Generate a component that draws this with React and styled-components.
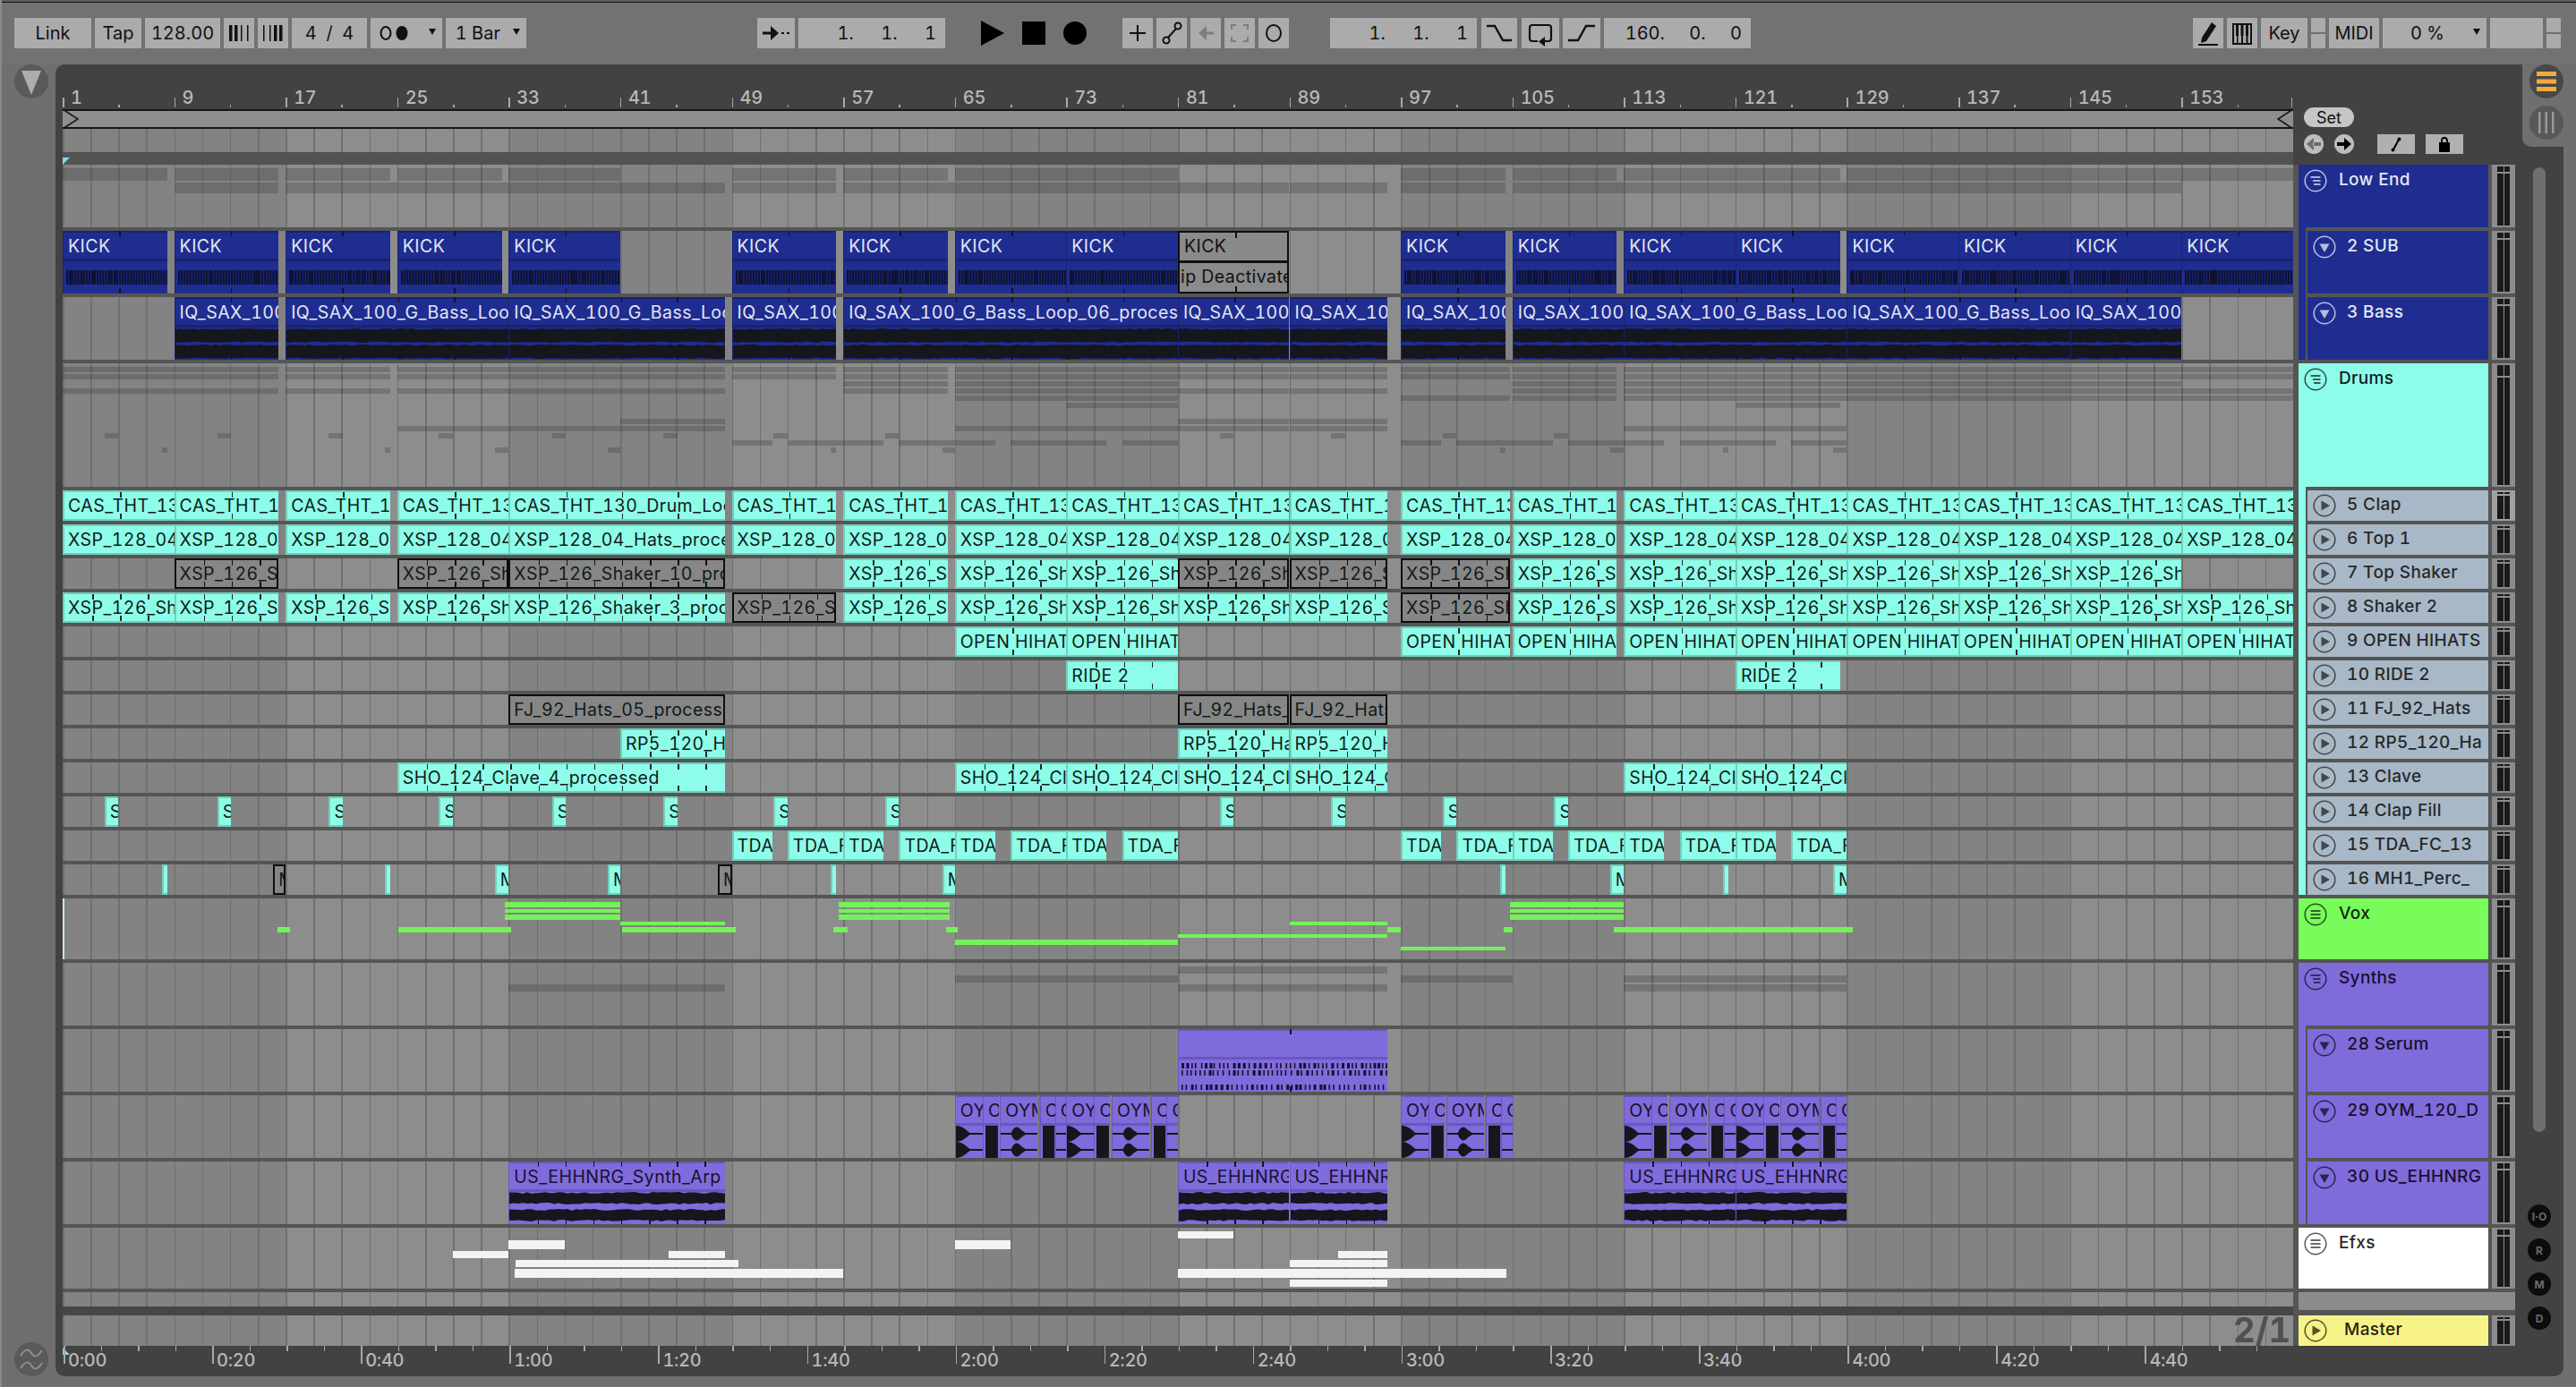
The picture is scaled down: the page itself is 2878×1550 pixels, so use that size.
import React from "react";
import styled, { createGlobalStyle, css } from "styled-components";

const BAR = 15.574;
const barX = (n) => (n - 1) * BAR;
const barW = (s, e) => (e - s) * BAR;

const TONES = {
  blue: { bg: "#1f2d90", edge: "#18236f", text: "#e4e6f4", ink: "#0e1230" },
  aqua: { bg: "#8dfde9", edge: "#72cfbb", text: "#12201e", ink: "#1c2a28" },
  steel: { bg: "#a8b8c6", edge: "#8b99a6", text: "#26292c", ink: "#26292c" },
  green: { bg: "#78fc5a", edge: "#62cf4a", text: "#14240f", ink: "#14240f" },
  purple: { bg: "#806bdb", edge: "#6a56bd", text: "#17112f", ink: "#17112f" },
  white: { bg: "#ffffff", edge: "#dddddd", text: "#2b2b2b", ink: "#333" },
  yellow: { bg: "#f8f389", edge: "#d0cc70", text: "#26250f", ink: "#3a3912" },
};

const GlobalStyle = createGlobalStyle`
  html, body {
    margin: 0;
    padding: 0;
    background: #6f6f6f;
  }
  * {
    box-sizing: border-box;
  }
`;

const Page = styled.div`
  width: 2878px;
  height: 1550px;
  overflow: hidden;
  background: #6f6f6f;
  border-left: 2px solid #8a8a8a;
  font-family: Inter, "Liberation Sans", sans-serif;
  font-variant-numeric: tabular-nums;
  display: flex;
  flex-direction: column;
`;

const TopEdge = styled.div`
  height: 3px;
  background: #5c5c5c;
  border-bottom: 1px solid #111;
`;

const Toolbar = styled.div`
  height: 69px;
  padding: 17px 0 0 14px;
  display: flex;
  gap: 4px;
  background: #727272;
`;

const ToolBox = styled.div`
  width: ${(p) => p.$w}px;
  height: 34px;
  margin-left: ${(p) => p.$ml || 0}px;
  flex: none;
  background: ${(p) => (p.$bare ? "transparent" : "#ababab")};
  color: #111;
  font-size: 20px;
  white-space: pre;
  word-spacing: ${(p) => p.$ws || 0}px;
  display: flex;
  align-items: center;
  justify-content: ${(p) => p.$justify || "center"};
  padding-right: ${(p) => p.$pr || 0}px;
  position: relative;
`;

const SplitBox = styled.div`
  width: ${(p) => p.$w}px;
  height: 34px;
  flex: none;
  display: flex;
  flex-direction: column;
  gap: 2px;
  & > i {
    flex: 1;
    background: #ababab;
  }
`;

const Caret = styled.span`
  position: absolute;
  right: 7px;
  top: 12px;
  border-left: 4.5px solid transparent;
  border-right: 4.5px solid transparent;
  border-top: 7px solid #111;
`;

const MainRow = styled.div`
  flex: 1;
  display: flex;
`;

const LeftRail = styled.div`
  width: 60px;
  height: 1466px;
  padding-left: 14px;
  display: flex;
  flex-direction: column;
  justify-content: space-between;
`;

const RailPill = styled.div`
  width: 38px;
  height: 38px;
  border-radius: 19px;
  background: ${(p) => p.$bg || "#5a5a5a"};
  display: flex;
  align-items: center;
  justify-content: center;
`;

const Panel = styled.div`
  position: relative;
  width: 2802px;
  height: 1466px;
  background: #424242;
  border-radius: 10px;
  display: flex;
`;

const PanelNotch = styled.div`
  position: absolute;
  top: 0;
  right: 0;
  width: 46px;
  height: 92px;
  background: #6f6f6f;
  border-bottom-left-radius: 10px;
  padding-left: 8px;
  display: flex;
  flex-direction: column;
  gap: 8px;
`;

const PanelMain = styled.div`
  width: 2748px;
  display: flex;
  flex-direction: column;
`;

const Gutter = styled.div`
  width: 54px;
  padding-top: 115px;
  display: flex;
  flex-direction: column;
  align-items: flex-start;
`;

const ScrollThumb = styled.div`
  width: 14px;
  height: 1078px;
  margin-left: 20px;
  border-radius: 7px;
  background: #6f6f6f;
`;

const RoundKeys = styled.div`
  margin: 81px 0 0 14px;
  display: flex;
  flex-direction: column;
  gap: 12px;
`;

const RoundKey = styled.div`
  width: 26px;
  height: 26px;
  border-radius: 50%;
  background: #0c0c0c;
  color: #6a6a6a;
  font-size: 12px;
  font-weight: 700;
  display: flex;
  align-items: center;
  justify-content: center;
`;

const RulerTop = styled.div`
  height: 112px;
  padding-left: 8px;
  display: flex;
`;

const RulerColumn = styled.div`
  width: 2492px;
  display: flex;
  flex-direction: column;
`;

const BeatRuler = styled.div`
  position: relative;
  height: 48px;
`;

const RulerTick = styled.span`
  position: absolute;
  ${(p) => (p.$flip ? "top: 0;" : "bottom: 0;")}
  width: 1.5px;
  height: ${(p) => p.$h}px;
  background: #a8a8a8;
`;

const RulerLabel = styled.span`
  position: absolute;
  top: ${(p) => p.$top}px;
  color: #b8b8b8;
  font-size: 20px;
  line-height: 24px;
  font-weight: 500;
  letter-spacing: -0.3px;
`;

const LoopStrip = styled.div`
  position: relative;
  height: 22px;
  margin-top: 2px;
  background: #8e8e8e;
  border-top: 2px solid #161616;
  border-bottom: 2px solid #161616;
`;

const LoopBrace = styled.svg`
  position: absolute;
  top: -2px;
  ${(p) => (p.$right ? "right: 0;" : "left: 0;")}
`;

const gridBack = css`
  background-color: #828282;
  background-image: repeating-linear-gradient(
      90deg,
      #707070 0 1.6px,
      transparent 1.6px 31.148px
    ),
    repeating-linear-gradient(
      90deg,
      #838383 0 249.18px,
      #8d8d8d 249.18px 498.37px
    );
`;

const GridStrip = styled.div`
  height: 26px;
  ${gridBack}
`;

const DarkBand = styled.div`
  position: relative;
  height: 14px;
  background: #525252;
`;

const PlayFlag = styled.span`
  position: absolute;
  left: 0;
  bottom: 0;
  width: 8px;
  height: 8px;
  background: #7fdcf0;
  clip-path: polygon(0 0, 100% 0, 0 100%);
`;

const PlayFoot = styled.span`
  position: absolute;
  left: 0;
  top: 2px;
  width: 8px;
  height: 8px;
  background: #7fdcf0;
  clip-path: polygon(0 0, 100% 100%, 0 100%);
`;

const SetControls = styled.div`
  width: 248px;
  padding: 48px 0 0 12px;
  display: flex;
  flex-direction: column;
  gap: 8px;
`;

const SetPill = styled.div`
  width: 56px;
  height: 22px;
  border-radius: 11px;
  background: #c6c6c6;
  color: #111;
  font-size: 18px;
  display: flex;
  align-items: center;
  justify-content: center;
`;

const SetRow = styled.div`
  display: flex;
  align-items: center;
`;

const NavDot = styled.div`
  width: 22px;
  height: 22px;
  margin-right: 12px;
  border-radius: 50%;
  background: #bdbdbd;
  display: flex;
  align-items: center;
  justify-content: center;
`;

const SetKey = styled.div`
  width: 42px;
  height: 22px;
  margin-left: ${(p) => p.$ml}px;
  background: #b0b0b0;
  display: flex;
  align-items: center;
  justify-content: center;
`;

const TrackStack = styled.div`
  margin-left: 8px;
  background: #555555;
  display: flex;
  flex-direction: column;
  gap: 4px;
`;

const TrackRow = styled.div`
  position: relative;
  height: ${(p) => p.$h}px;
  display: flex;
  ${(p) =>
    p.$split &&
    css`
      margin-top: 6px;
      &::before {
        content: "";
        position: absolute;
        left: 0;
        top: -10px;
        width: 2492px;
        height: 10px;
        background: #464646;
      }
    `}
`;

const Lane = styled.div`
  position: relative;
  width: 2492px;
  height: 100%;
  flex: none;
  margin-right: 6px;
  overflow: hidden;
  ${gridBack}
`;

const TrackHead = styled.div`
  position: relative;
  width: ${(p) => (p.$strip ? 202 : 212)}px;
  height: 100%;
  flex: none;
  margin-left: ${(p) => (p.$strip ? 10 : 0)}px;
  margin-right: 4px;
  padding: ${(p) => (p.$small ? 4 : 5)}px 0 0 6px;
  background: ${(p) => TONES[p.$tone].bg};
  color: ${(p) => TONES[p.$tone].text};
  display: flex;
  align-items: flex-start;
  ${(p) =>
    p.$strip &&
    css`
      &::before {
        content: "";
        position: absolute;
        left: -10px;
        top: -4px;
        bottom: 0;
        width: 8px;
        background: ${TONES[p.$strip].bg};
      }
    `}
`;

const HeadName = styled.span`
  margin-left: ${(p) => p.$ml}px;
  margin-top: -1px;
  font-size: 19px;
  line-height: 25px;
  font-weight: 500;
  white-space: nowrap;
  letter-spacing: 0.35px;
`;

const Meter = styled.div`
  width: 26px;
  height: 100%;
  flex: none;
  padding: 2px 6px;
  background: ${(p) => (p.$lit ? "#a0a0a0" : "#8c8c8c")};
  display: flex;
  gap: 1px;
`;

const MeterCol = styled.div`
  flex: 1;
  display: flex;
  flex-direction: column;
  gap: 2px;
  & > i:first-child {
    height: ${(p) => p.$cap}px;
    background: #1a1a1a;
  }
  & > i:last-child {
    flex: 1;
    background: #1a1a1a;
  }
`;

const SplitRest = styled.div`
  width: 242px;
  height: 20px;
  background: #8c8c8c;
`;

const TwoOne = styled.span`
  position: absolute;
  right: 3px;
  top: -3px;
  color: #505050;
  font-size: 38px;
  line-height: 38px;
  font-weight: 700;
`;

const TimeRuler = styled.div`
  position: relative;
  height: 34px;
  margin-left: 8px;
  width: 2492px;
`;

const LaneBar = styled.span`
  position: absolute;
  background: rgba(50, 50, 50, 0.27);
`;

const Note = styled.span`
  position: absolute;
  background: ${(p) => p.$color};
`;

const PlayLine = styled.span`
  position: absolute;
  left: 0;
  top: 0;
  bottom: 0;
  width: 2px;
  background: #bfe9f4;
`;

const clipFrame = css`
  position: absolute;
  top: 0;
  bottom: 0;
  overflow: hidden;
`;

const clipText = css`
  font-size: 19.5px;
  letter-spacing: 0.45px;
  white-space: nowrap;
`;

const FlatClip = styled.div`
  ${clipFrame}
  ${clipText}
  padding-left: 4px;
  background: ${(p) => (p.$off ? "#868686" : TONES.aqua.bg)};
  border: 2px solid ${(p) => (p.$off ? "#0e0e0e" : TONES.aqua.edge)};
  border-right: ${(p) => (p.$off ? "2px solid #0e0e0e" : "none")};
  color: #0f1a18;
  line-height: 30px;
`;

const ClipTick = styled.i`
  position: absolute;
  ${(p) => (p.$low ? "bottom: 0;" : "top: 0;")}
  width: 1.5px;
  height: 6px;
  background: ${(p) => p.$color};
`;

const TallClip = styled.div`
  ${clipFrame}
  background: ${(p) => (p.$off ? "#8a8a8a" : TONES[p.$tone].bg)};
  border-left: 1.5px solid ${(p) => (p.$off ? "#0e0e0e" : TONES[p.$tone].edge)};
  ${(p) => p.$off && "border: 2px solid #0e0e0e;"}
  color: ${(p) => (p.$off ? "#111" : TONES[p.$tone].text)};
  display: flex;
  flex-direction: column;
`;

const TallHead = styled.div`
  ${clipText}
  flex: none;
  height: 34px;
  padding-left: 5px;
  border-top: ${(p) => (p.$off ? "0" : `2px solid ${p.$edge}`)};
  border-bottom: 3px solid ${(p) => p.$edge};
  line-height: 31px;
`;

const TallBody = styled.div`
  flex: 1;
  overflow: hidden;
`;

const OffNote = styled.div`
  ${clipText}
  line-height: 30px;
  display: flex;
  justify-content: center;
`;

const rng = (seed) => {
  let s = seed * 9301 + 49297;
  return () => {
    s = (s * 9301 + 49297) % 233280;
    return s / 233280;
  };
};

// Kick clips: a dense comb of hits
const KickWave = ({ width, seed }) => {
  const r = rng(seed);
  const bars = [];
  for (let x = 3; x < width - 2; x += 3.1) {
    const w = r() > 0.86 ? 3.1 : 2.2;
    bars.push(<rect key={x} x={x} y="10" width={w} height="16" />);
  }
  return (
    <svg width={width} height="36" fill={TONES.blue.ink} style={{ display: "block" }}>
      {bars}
    </svg>
  );
};

const bandPath = (width, top, bottom, r, amp) => {
  let up = `M0 ${top}`;
  let down = "";
  for (let x = 0; x <= width + 5; x += 5) {
    up += ` L${x} ${top + r() * amp}`;
    down = ` L${x} ${bottom - r() * amp}` + down;
  }
  return `${up}${down} Z`;
};

// Two channels of a loud waveform, with a thin gap in the middle
const BandWave = ({ width, seed, rows, amp }) => {
  const r = rng(seed);
  return (
    <svg width={width} height="36" fill="#16161d" style={{ display: "block" }}>
      {rows.map(([a, b]) => (
        <path key={a} d={bandPath(width, a, b, r, amp)} />
      ))}
    </svg>
  );
};

const SerumWave = ({ width, seed }) => {
  const r = rng(seed);
  const marks = [];
  [[4, 6], [12, 6], [28, 6]].forEach(([y, h]) => {
    for (let x = 3; x < width - 2; x += 3.9 + r() * 3) {
      marks.push(<rect key={`${y}-${x}`} x={x} y={y} width={r() > 0.7 ? 3 : 1.6} height={h} />);
    }
  });
  return (
    <svg width={width} height="36" fill="#17112f" style={{ display: "block" }}>
      {marks}
    </svg>
  );
};

const hitPath = (kind, w, c) => {
  const h = 9;
  if (kind === "decay")
    return `M0 ${c - h} C${w * 0.25} ${c - h} ${w * 0.4} ${c - 3} ${w * 0.5} ${c - 1} H${w} V${c + 1} H${w * 0.5} C${w * 0.4} ${c + 3} ${w * 0.25} ${c + h} 0 ${c + h} Z`;
  if (kind === "swell")
    return `M0 ${c - 1} H${w * 0.28} C${w * 0.36} ${c - h} ${w * 0.45} ${c - h} ${w * 0.55} ${c - 4} L${w * 0.66} ${c - 1} H${w} V${c + 1} H${w * 0.66} L${w * 0.55} ${c + 4} C${w * 0.45} ${c + h} ${w * 0.36} ${c + h} ${w * 0.28} ${c + 1} H0 Z`;
  if (kind === "block") return `M2 ${c - h} H${w - 2} V${c + h} H2 Z`;
  return `M0 ${c - 1} H${w} V${c + 1} H0 Z`;
};

const HitWave = ({ width, kind }) => (
  <svg width={width} height="36" fill="#16161d" style={{ display: "block" }}>
    <path d={hitPath(kind, width, 9)} />
    <path d={hitPath(kind, width, 27)} />
  </svg>
);

const FoldIcon = ({ kind, flat }) => (
  <svg width="26" height="26" viewBox="0 0 26 26" fill="none" stroke="currentColor" style={{ flex: "none", opacity: 0.78 }}>
    <circle cx="13" cy="13" r="11.8" strokeWidth="1.5" />
    {kind === "group" && (
      <g strokeWidth="1.8">
        <path d="M7.5 9 H18.5" />
        <path d={flat ? "M7.5 13 H18.5" : "M10 13 H18.5"} />
        <path d={flat ? "M7.5 17 H18.5" : "M11 17 H18.5"} />
      </g>
    )}
    {kind === "down" && <path d="M7.5 9.5 H18.5 L13 19 Z" fill="currentColor" stroke="none" />}
    {kind === "play" && <path d="M9.5 7.5 L19 13 L9.5 18.5 Z" fill="currentColor" stroke="none" />}
  </svg>
);

const MeterCell = ({ cap, lit }) => (
  <Meter $lit={lit}>
    <MeterCol $cap={cap}>
      <i />
      <i />
    </MeterCol>
    <MeterCol $cap={cap}>
      <i />
      <i />
    </MeterCol>
  </Meter>
);

const Icon = ({ w = 34, children, fill = "none", stroke = "#111" }) => (
  <svg width={w} height="34" viewBox={`0 0 ${w} 34`} fill={fill} stroke={stroke} strokeWidth="2">
    {children}
  </svg>
);

const BarsIcon = ({ heavyFirst }) => (
  <Icon fill="#111" stroke="none">
    <rect x="6" y="8" width={heavyFirst ? 3.5 : 1.5} height="18" />
    <rect x={heavyFirst ? 12 : 13} y="8" width={heavyFirst ? 3.5 : 1.5} height="18" />
    <rect x={heavyFirst ? 19 : 18} y="8" width={heavyFirst ? 1.5 : 3.5} height="18" />
    <rect x={heavyFirst ? 26 : 24} y="8" width={heavyFirst ? 1.5 : 3.5} height="18" />
  </Icon>
);

const KICK = [[1, 8.5], [9, 16.5], [17, 24.5], [25, 32.5], [33, 41], [49, 56.5], [57, 64.5], [65, 73], [73, 81], [81, 89, 1], [97, 104.5], [105, 112.5], [113, 121], [121, 128.5], [129, 137], [137, 145], [145, 153], [153, 161]];
const BASS = [[9, 16.5], [17, 33], [33, 48.5], [49, 56.5], [57, 81], [81, 89], [89, 96], [97, 104.5], [105, 113], [113, 129], [129, 145], [145, 153]];
const LOOP = [[1, 9], [9, 16.5], [17, 24.5], [25, 33], [33, 48.5], [49, 56.5], [57, 64.5], [65, 73], [73, 81], [81, 89], [89, 96], [97, 104.8], [105, 112.5], [113, 121], [121, 129], [129, 137], [137, 145], [145, 153], [153, 161]];

const tdaSpans = [49, 57, 65, 73, 97, 105, 113, 121].flatMap((s) => [[s, s + 2.9], [s + 4, s + 8]]);
const hitSpans = (list, len) => list.map((s) => [s, s + len]);

const DRUM_ROWS = [
  { name: "5 Clap", label: "CAS_THT_130_Drum_Loop", tick: 4, clips: LOOP, lit: true },
  { name: "6 Top 1", label: "XSP_128_04_Hats_processed", clips: LOOP },
  {
    name: "7 Top Shaker",
    label: "XSP_126_Shaker_10_processed",
    tick: 2,
    clips: [[9, 16.5, 1], [25, 33, 1], [33, 48.5, 1], [57, 64.5], [65, 73], [73, 81], [81, 89, 1], [89, 96, 1], [97, 104.8, 1], [105, 112.5], [113, 121], [121, 129], [129, 137], [137, 145], [145, 153]],
  },
  {
    name: "8 Shaker 2",
    label: "XSP_126_Shaker_3_processed",
    tick: 2,
    clips: LOOP.map(([s, e]) => (s === 49 || s === 97 ? [s, e, 1] : [s, e])),
  },
  {
    name: "9 OPEN HIHATS",
    label: "OPEN HIHATS",
    tick: 4,
    clips: [[65, 73], [73, 81], [97, 104.8], [105, 112.5], [113, 121], [121, 129], [129, 137], [137, 145], [145, 153], [153, 161]],
  },
  { name: "10 RIDE 2", label: "RIDE 2", tick: 2, clips: [[73, 81], [121, 128.5]] },
  { name: "11 FJ_92_Hats", label: "FJ_92_Hats_05_processed", clips: [[33, 48.5, 1], [81, 89, 1], [89, 96, 1]] },
  { name: "12 RP5_120_Ha", label: "RP5_120_Hats", tick: 2, clips: [[41, 48.5], [81, 89], [89, 96]] },
  { name: "13 Clave", label: "SHO_124_Clave_4_processed", tick: 2, clips: [[25, 48.5], [65, 73], [73, 81], [81, 89], [89, 96], [113, 121], [121, 129]] },
  { name: "14 Clap Fill", label: "S", clips: hitSpans([4, 12.1, 20.1, 28, 36.1, 44.1, 52, 60, 84, 92, 100, 108], 1) },
  { name: "15 TDA_FC_13", label: "TDA_FC_13", clips: tdaSpans },
  {
    name: "16 MH1_Perc_",
    label: "M",
    clips: [[8.15, 8.5], [16.1, 17, 1], [24.1, 24.5], [32, 33], [40.1, 41], [48, 49, 1], [56.1, 56.5], [64.1, 65], [104.1, 104.5], [112, 113], [120.1, 120.5], [128, 129]],
  },
];

const VOX_NOTES = [
  ...[[32.7, 41], [56.7, 64.6], [104.8, 113]].flatMap(([s, e]) => [[s, e, 4, 6], [s, e, 12, 4], [s, e, 18, 6]]),
  [41, 48.5, 26, 4],
  [89, 96, 26, 4],
  [16.4, 17.3, 32, 6],
  [25.1, 33.2, 32, 6],
  [41.1, 49.3, 32, 6],
  [56.3, 57.3, 32, 6],
  [64.4, 65.2, 32, 6],
  [96, 97, 32, 6],
  [104.4, 105, 32, 6],
  [112.3, 129.4, 32, 6],
  [81, 96, 40, 4],
  [65, 81, 46, 6],
  [97, 104.5, 54, 4],
];

const EFX_NOTES = [
  [33, 37, 14, 10],
  [65, 69, 14, 10],
  [81, 85, 4, 8],
  [29, 33, 26, 8],
  [44.5, 48.5, 26, 8],
  [92.5, 96, 26, 8],
  [33.5, 49.5, 36, 8],
  [89, 96, 36, 8],
  [33.4, 57, 46, 10],
  [81, 104.6, 46, 10],
  [89, 96, 58, 8],
];

const OYM_STARTS = [65, 73, 97, 113, 121];
const OYM_PARTS = [[0, 2, "decay"], [2, 3.15, "block"], [3.25, 5.95, "swell"], [6.1, 7.2, "block"], [7.2, 8, "line"]];
const OYM_CLIPS = OYM_STARTS.flatMap((s) => OYM_PARTS.map(([a, b, kind]) => ({ s: s + a, e: s + b, kind })));

const SYNTH_BARS = [
  [81, 96, 4],
  [65, 81, 14],
  [97, 105, 14],
  [113, 129, 14],
  [33, 48.5, 24],
  [81, 96, 24],
  [113, 129, 24],
];

const US_CLIPS = [[33, 48.5], [81, 89], [89, 96], [113, 121], [121, 129]];

const ticksFor = (s, e, step, color, both = true) => {
  const out = [];
  for (let t = step; s + t < e; t += step) {
    const left = t * BAR;
    out.push(<ClipTick key={`a${t}`} $color={color} style={{ left }} />);
    if (both) out.push(<ClipTick key={`b${t}`} $low $color={color} style={{ left }} />);
  }
  return out;
};

const SmallClips = ({ row }) =>
  row.clips.map(([s, e, off]) => (
    <FlatClip key={s} $off={off} style={{ left: barX(s), width: barW(s, e) }}>
      {row.tick ? ticksFor(s, e, row.tick, off ? "#111" : TONES.aqua.ink) : null}
      {row.label}
    </FlatClip>
  ));

const Bars = ({ spans, top, height }) =>
  spans
    .filter((c) => !c[2])
    .map(([s, e]) => (
      <LaneBar key={`${top}-${s}`} style={{ left: barX(s), width: barW(s, e), top, height }} />
    ));

const App = () => {
  const beatNumbers = [];
  for (let n = 1; n <= 153; n += 8) beatNumbers.push(n);
  const timeLabels = [];
  for (let i = 0; i < 15; i++) {
    const total = i * 20;
    timeLabels.push(`${Math.floor(total / 60)}:${String(total % 60).padStart(2, "0")}`);
  }

  return (
    <>
      <GlobalStyle />
      <Page>
        <TopEdge />
        <Toolbar>
          <ToolBox $w={86}>Link</ToolBox>
          <ToolBox $w={52}>Tap</ToolBox>
          <ToolBox $w={84}>128.00</ToolBox>
          <ToolBox $w={34}>
            <BarsIcon heavyFirst />
          </ToolBox>
          <ToolBox $w={34}>
            <BarsIcon />
          </ToolBox>
          <ToolBox $w={84}>{"4  /  4"}</ToolBox>
          <ToolBox $w={80} $justify="flex-start">
            <svg width="50" height="34" fill="#111" stroke="#111" strokeWidth="2">
              <ellipse cx="17" cy="17" rx="5.5" ry="7" fill="none" />
              <ellipse cx="35" cy="17" rx="6.5" ry="8" stroke="none" />
            </svg>
            <Caret />
          </ToolBox>
          <ToolBox $w={90} $justify="flex-start">
            {"  1 Bar"}
            <Caret />
          </ToolBox>
          <ToolBox $w={42} $ml={254}>
            <Icon w={42}>
              <path d="M6 17 H20" strokeWidth="3" />
              <path d="M15 9 L24 17 L15 25 Z" fill="#111" stroke="none" />
              <path d="M27 17 H30 M33 17 H36" strokeWidth="2" />
            </Icon>
          </ToolBox>
          <ToolBox $w={164} $justify="flex-end" $pr={10} $ws={25}>
            1. 1. 1
          </ToolBox>
          <ToolBox $w={26} $ml={36} $bare>
            <svg width="26" height="34" fill="#000">
              <path d="M0 3 L26 17 L0 31 Z" />
            </svg>
          </ToolBox>
          <ToolBox $w={26} $ml={16} $bare>
            <svg width="26" height="34" fill="#000">
              <rect x="0" y="4" width="26" height="26" />
            </svg>
          </ToolBox>
          <ToolBox $w={26} $ml={16} $bare>
            <svg width="26" height="34" fill="#000">
              <ellipse cx="13" cy="17" rx="13" ry="13" />
            </svg>
          </ToolBox>
          <ToolBox $w={34} $ml={36}>
            <Icon>
              <path d="M17 8 V26 M8 17 H26" />
            </Icon>
          </ToolBox>
          <ToolBox $w={34}>
            <Icon>
              <circle cx="11" cy="25" r="3.5" />
              <circle cx="24" cy="9" r="3.5" />
              <path d="M13 22 L22 12" />
            </Icon>
          </ToolBox>
          <ToolBox $w={34}>
            <Icon stroke="#7d7d7d">
              <path d="M26 17 H16" strokeWidth="3" />
              <path d="M18 9 L9 17 L18 25 Z" fill="#7d7d7d" stroke="none" />
            </Icon>
          </ToolBox>
          <ToolBox $w={34}>
            <Icon stroke="#7d7d7d">
              <path d="M8 13 V8 H13 M21 8 H26 V13 M26 21 V26 H21 M13 26 H8 V21" />
            </Icon>
          </ToolBox>
          <ToolBox $w={34}>
            <Icon>
              <ellipse cx="17" cy="17" rx="8" ry="9" />
            </Icon>
          </ToolBox>
          <ToolBox $w={164} $ml={42} $justify="flex-end" $pr={10} $ws={25}>
            1. 1. 1
          </ToolBox>
          <ToolBox $w={40} $ml={1}>
            <Icon w={40}>
              <path d="M6 9 H15 L24 25 H34" strokeWidth="2.4" />
            </Icon>
          </ToolBox>
          <ToolBox $w={42} $ml={1}>
            <Icon w={42}>
              <path d="M18 26 H12 Q9 26 9 23 V11 Q9 8 12 8 H30 Q33 8 33 11 V23 Q33 26 30 26 H25" strokeWidth="2.2" />
              <path d="M26 21 L19 26.5 L26 32 Z" fill="#111" stroke="none" />
            </Icon>
          </ToolBox>
          <ToolBox $w={42}>
            <Icon w={42}>
              <path d="M6 25 H17 L26 9 H36" strokeWidth="2.4" />
            </Icon>
          </ToolBox>
          <ToolBox $w={164} $justify="flex-end" $pr={10} $ws={22}>
            160. 0. 0
          </ToolBox>
          <ToolBox $w={34} $ml={490}>
            <Icon fill="#111" stroke="none">
              <path d="M10 22 L21 5 L26 9 L15 26 L9 28 Z" />
              <rect x="6" y="29" width="22" height="2" />
            </Icon>
          </ToolBox>
          <ToolBox $w={34}>
            <Icon fill="#111" stroke="none">
              <path d="M6 6 H28 V30 H6 Z M8 8 V28 H11 V20 H10 V8 Z M13 8 V20 H12.5 V28 H16 V20 H15.5 V8 Z M18.5 8 V20 H18 V28 H21.5 V20 H21 V8 Z M24 8 V20 H23.5 V28 H26 V8 Z" fillRule="evenodd" />
            </Icon>
          </ToolBox>
          <ToolBox $w={52}>Key</ToolBox>
          <SplitBox $w={16}>
            <i />
            <i />
          </SplitBox>
          <ToolBox $w={56}>MIDI</ToolBox>
          <ToolBox $w={116}>
            {"0 %   "}
            <Caret />
          </ToolBox>
          <ToolBox $w={59} />
          <SplitBox $w={16}>
            <i />
            <i />
          </SplitBox>
        </Toolbar>
        <MainRow>
          <LeftRail>
            <RailPill>
              <svg width="22" height="30" fill="#adadad">
                <path d="M0 3 H22 L11 30 Z" />
              </svg>
            </RailPill>
            <RailPill>
              <svg width="26" height="30" fill="none" stroke="#8f8f8f" strokeWidth="2">
                <path d="M1 11 C6 3 10 3 13 8 C16 13 20 13 25 5" />
                <path d="M1 25 C6 17 10 17 13 22 C16 27 20 27 25 19" />
              </svg>
            </RailPill>
          </LeftRail>
          <Panel>
            <PanelMain>
              <RulerTop>
                <RulerColumn>
                  <BeatRuler>
                    {beatNumbers.map((n) => (
                      <React.Fragment key={n}>
                        <RulerTick $h={11} style={{ left: barX(n) }} />
                        <RulerTick $h={3} style={{ left: barX(n + 4) }} />
                        <RulerLabel $top={25} style={{ left: barX(n) + 9 }}>
                          {n}
                        </RulerLabel>
                      </React.Fragment>
                    ))}
                    <RulerTick $h={11} style={{ left: barX(161) - 2 }} />
                  </BeatRuler>
                  <LoopStrip>
                    <LoopBrace width="18" height="22" fill="none" stroke="#161616" strokeWidth="1.6">
                      <path d="M0 0 L17 11 L0 22" />
                    </LoopBrace>
                    <LoopBrace $right width="18" height="22" fill="none" stroke="#161616" strokeWidth="1.6">
                      <path d="M18 0 L1 11 L18 22" />
                    </LoopBrace>
                  </LoopStrip>
                  <GridStrip />
                  <DarkBand>
                    <PlayFlag />
                  </DarkBand>
                </RulerColumn>
                <SetControls>
                  <SetPill>Set</SetPill>
                  <SetRow>
                    <NavDot>
                      <svg width="18" height="16" fill="#6e6e6e">
                        <path d="M9 1 L1 8 L9 15 Z M8 6 H17 V10 H8 Z" />
                      </svg>
                    </NavDot>
                    <NavDot>
                      <svg width="18" height="16" fill="#000">
                        <path d="M9 1 L17 8 L9 15 Z M1 6 H10 V10 H1 Z" />
                      </svg>
                    </NavDot>
                    <SetKey $ml={14}>
                      <svg width="14" height="18" fill="#000" stroke="#000" strokeWidth="2">
                        <path d="M4 15 L10 4" />
                        <circle cx="10.5" cy="3.5" r="1" />
                        <circle cx="3.5" cy="15.5" r="1" />
                      </svg>
                    </SetKey>
                    <SetKey $ml={12}>
                      <svg width="16" height="20" fill="#000">
                        <path d="M2 8 H14 V19 H2 Z" />
                        <path d="M5 8 V6 A3 3 0 0 1 11 6 V8" fill="none" stroke="#000" strokeWidth="1.8" />
                      </svg>
                    </SetKey>
                  </SetRow>
                </SetControls>
              </RulerTop>
              <TrackStack>
                <TrackRow $h={70}>
                  <Lane>
                    <Bars spans={KICK} top={4} height={14} />
                    <Bars spans={BASS} top={20} height={12} />
                  </Lane>
                  <TrackHead $tone="blue">
                    <FoldIcon kind="group" />
                    <HeadName $ml={13}>Low End</HeadName>
                  </TrackHead>
                  <MeterCell cap={6} />
                </TrackRow>

                <TrackRow $h={70}>
                  <Lane>
                    {KICK.map(([s, e, off], i) => (
                      <TallClip key={s} $tone="blue" $off={off} style={{ left: barX(s), width: barW(s, e) }}>
                        {ticksFor(s, e, 4, off ? "#111" : TONES.blue.ink)}
                        <TallHead $off={off} $edge={off ? "#0e0e0e" : TONES.blue.edge}>KICK</TallHead>
                        <TallBody>
                          {off ? <OffNote>Clip Deactivated</OffNote> : <KickWave width={barW(s, e)} seed={i + 3} />}
                        </TallBody>
                      </TallClip>
                    ))}
                  </Lane>
                  <TrackHead $tone="blue" $strip="blue">
                    <FoldIcon kind="down" />
                    <HeadName $ml={12}>2 SUB</HeadName>
                  </TrackHead>
                  <MeterCell cap={6} />
                </TrackRow>

                <TrackRow $h={70}>
                  <Lane>
                    {BASS.map(([s, e], i) => (
                      <TallClip key={s} $tone="blue" style={{ left: barX(s), width: barW(s, e) }}>
                        {ticksFor(s, e, 4, TONES.blue.ink)}
                        <TallHead $edge={TONES.blue.edge}>IQ_SAX_100_G_Bass_Loop_06_processed</TallHead>
                        <TallBody>
                          <BandWave width={barW(s, e)} seed={i + 11} rows={[[1, 17], [19, 35]]} amp={1.4} />
                        </TallBody>
                      </TallClip>
                    ))}
                  </Lane>
                  <TrackHead $tone="blue" $strip="blue">
                    <FoldIcon kind="down" />
                    <HeadName $ml={12}>3 Bass</HeadName>
                  </TrackHead>
                  <MeterCell cap={6} />
                </TrackRow>

                <TrackRow $h={138}>
                  <Lane>
                    {DRUM_ROWS.map((row, i) => (
                      <Bars key={row.name} spans={row.clips} top={4 + i * 8 + (i >= 7 ? 2 : 0)} height={6} />
                    ))}
                  </Lane>
                  <TrackHead $tone="aqua">
                    <FoldIcon kind="group" />
                    <HeadName $ml={13}>Drums</HeadName>
                  </TrackHead>
                  <MeterCell cap={12} />
                </TrackRow>

                {DRUM_ROWS.map((row) => (
                  <TrackRow key={row.name} $h={34}>
                    <Lane>
                      <SmallClips row={row} />
                    </Lane>
                    <TrackHead $tone="steel" $strip="aqua" $small>
                      <FoldIcon kind="play" />
                      <HeadName $ml={12}>{row.name}</HeadName>
                    </TrackHead>
                    <MeterCell cap={2} lit={row.lit} />
                  </TrackRow>
                ))}

                <TrackRow $h={68}>
                  <Lane>
                    <PlayLine />
                    {VOX_NOTES.map(([s, e, top, height]) => (
                      <Note key={`${s}-${top}`} $color="#74f25a" style={{ left: barX(s), width: barW(s, e), top, height }} />
                    ))}
                  </Lane>
                  <TrackHead $tone="green">
                    <FoldIcon kind="group" flat />
                    <HeadName $ml={13}>Vox</HeadName>
                  </TrackHead>
                  <MeterCell cap={6} />
                </TrackRow>

                <TrackRow $h={70}>
                  <Lane>
                    {SYNTH_BARS.map(([s, e, top]) => (
                      <LaneBar key={`${s}-${top}`} style={{ left: barX(s), width: barW(s, e), top, height: 8 }} />
                    ))}
                  </Lane>
                  <TrackHead $tone="purple">
                    <FoldIcon kind="group" />
                    <HeadName $ml={13}>Synths</HeadName>
                  </TrackHead>
                  <MeterCell cap={6} />
                </TrackRow>

                <TrackRow $h={70}>
                  <Lane>
                    <TallClip $tone="purple" style={{ left: barX(81), width: barW(81, 96) }}>
                      {ticksFor(81, 96, 8, TONES.purple.ink)}
                      <TallHead $edge={TONES.purple.edge} />
                      <TallBody>
                        <SerumWave width={barW(81, 96)} seed={5} />
                      </TallBody>
                    </TallClip>
                  </Lane>
                  <TrackHead $tone="purple" $strip="purple">
                    <FoldIcon kind="down" />
                    <HeadName $ml={12}>28 Serum</HeadName>
                  </TrackHead>
                  <MeterCell cap={6} />
                </TrackRow>

                <TrackRow $h={70}>
                  <Lane>
                    {OYM_CLIPS.map(({ s, e, kind }) => (
                      <TallClip key={s} $tone="purple" style={{ left: barX(s), width: barW(s, e) }}>
                        <TallHead $edge={TONES.purple.edge}>OYM_120_Drums</TallHead>
                        <TallBody>
                          <HitWave width={barW(s, e)} kind={kind} />
                        </TallBody>
                      </TallClip>
                    ))}
                  </Lane>
                  <TrackHead $tone="purple" $strip="purple">
                    <FoldIcon kind="down" />
                    <HeadName $ml={12}>29 OYM_120_D</HeadName>
                  </TrackHead>
                  <MeterCell cap={6} />
                </TrackRow>

                <TrackRow $h={70}>
                  <Lane>
                    {US_CLIPS.map(([s, e], i) => (
                      <TallClip key={s} $tone="purple" style={{ left: barX(s), width: barW(s, e) }}>
                        {ticksFor(s, e, 2, TONES.purple.ink)}
                        <TallHead $edge={TONES.purple.edge}>US_EHHNRG_Synth_Arp</TallHead>
                        <TallBody>
                          <BandWave width={barW(s, e)} seed={i + 21} rows={[[0, 14], [19, 33]]} amp={2} />
                        </TallBody>
                      </TallClip>
                    ))}
                  </Lane>
                  <TrackHead $tone="purple" $strip="purple">
                    <FoldIcon kind="down" />
                    <HeadName $ml={12}>30 US_EHHNRG</HeadName>
                  </TrackHead>
                  <MeterCell cap={6} />
                </TrackRow>

                <TrackRow $h={68}>
                  <Lane>
                    {EFX_NOTES.map(([s, e, top, height]) => (
                      <Note key={`${s}-${top}`} $color="#f3f3f3" style={{ left: barX(s), width: barW(s, e), top, height }} />
                    ))}
                  </Lane>
                  <TrackHead $tone="white">
                    <FoldIcon kind="group" flat />
                    <HeadName $ml={13}>Efxs</HeadName>
                  </TrackHead>
                  <MeterCell cap={6} />
                </TrackRow>

                <TrackRow $h={16}>
                  <Lane />
                  <SplitRest />
                </TrackRow>

                <TrackRow $h={34} $split>
                  <Lane>
                    <TwoOne>2/1</TwoOne>
                  </Lane>
                  <TrackHead $tone="yellow" $small>
                    <FoldIcon kind="play" />
                    <HeadName $ml={19}>Master</HeadName>
                  </TrackHead>
                  <MeterCell cap={2} />
                </TrackRow>
              </TrackStack>
              <TimeRuler>
                <PlayFoot />
                {timeLabels.map((t, i) => (
                  <React.Fragment key={t}>
                    <RulerTick $flip $h={20} style={{ left: 1 + i * 166.1 }} />
                    {[1, 2, 3].map((q) => (
                      <RulerTick key={q} $flip $h={6} style={{ left: 1 + i * 166.1 + q * 41.52 }} />
                    ))}
                    <RulerLabel $top={4} style={{ left: 6 + i * 166.1 }}>
                      {t}
                    </RulerLabel>
                  </React.Fragment>
                ))}
              </TimeRuler>
            </PanelMain>
            <Gutter>
              <ScrollThumb />
              <RoundKeys>
                <RoundKey>I·O</RoundKey>
                <RoundKey>R</RoundKey>
                <RoundKey>M</RoundKey>
                <RoundKey>D</RoundKey>
              </RoundKeys>
            </Gutter>
            <PanelNotch>
              <RailPill $bg="#484848">
                <svg width="22" height="24" fill="#f5aa3c">
                  <rect y="1" width="22" height="5" />
                  <rect y="9.5" width="22" height="5" />
                  <rect y="18" width="22" height="5" />
                </svg>
              </RailPill>
              <RailPill $bg="#585858">
                <svg width="20" height="24" fill="#999">
                  <rect x="1" width="2.5" height="24" />
                  <rect x="8.5" width="2.5" height="24" />
                  <rect x="16" width="2.5" height="24" />
                </svg>
              </RailPill>
            </PanelNotch>
          </Panel>
        </MainRow>
      </Page>
    </>
  );
};

export default App;
